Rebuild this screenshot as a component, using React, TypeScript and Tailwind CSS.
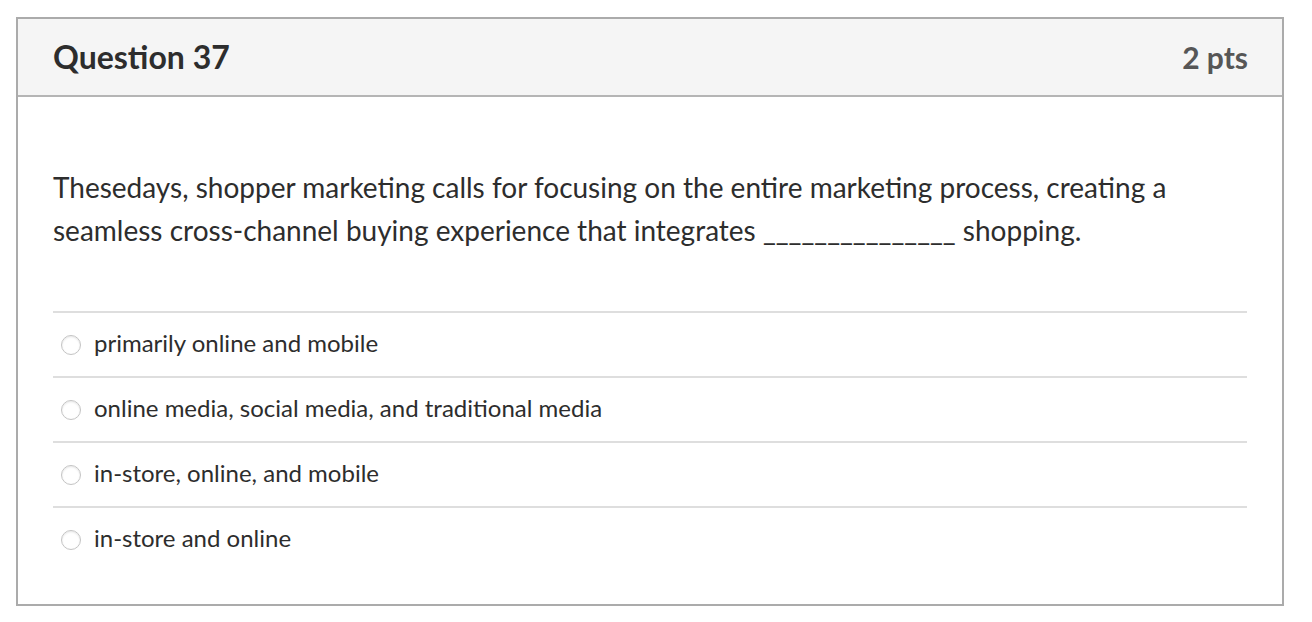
const answers = [
  "primarily online and mobile",
  "online media, social media, and traditional media",
  "in-store, online, and mobile",
  "in-store and online",
];

function Radio() {
  return (
    <span className="inline-block h-[20px] w-[20px] shrink-0 rounded-full border border-[#c4c4c4] bg-white shadow-[inset_0_1px_2px_rgba(0,0,0,0.1)]" />
  );
}

export default function App() {
  return (
    <div
      className="min-h-[622px] bg-white pt-[17px] pl-4 pr-[28px] text-[#2d2d2d]"
      style={{ fontFamily: "Lato, 'Open Sans', sans-serif" }}
    >
      <div className="w-[1268px] border-2 border-[#ababab]">
        <div className="flex h-[78px] items-center justify-between border-b-2 border-[#b5b5b5] bg-[#f5f5f5] pl-[35px] pr-[34px]">
          <h2 className="text-[32px] font-bold leading-none text-[#2d2d2d]">
            Question 37
          </h2>
          <span className="text-[30px] font-bold leading-none text-[#565656]">
            2 pts
          </span>
        </div>

        <div className="px-[35px] pt-[69px] pb-[33px]">
          <p className="text-[28px] leading-[43px]">
            Thesedays, shopper marketing calls for focusing on the entire
            marketing process, creating a seamless cross-channel buying
            experience that integrates _______________ shopping.
          </p>

          <div className="mt-[59px]">
            {answers.map((a) => (
              <div
                key={a}
                className="flex h-[65px] items-center gap-[13px] border-t-2 border-[#dedede] pl-[8px]"
              >
                <Radio />
                <span className="-mt-[4px] text-[24px] leading-none">{a}</span>
              </div>
            ))}
          </div>
        </div>
      </div>
    </div>
  );
}
